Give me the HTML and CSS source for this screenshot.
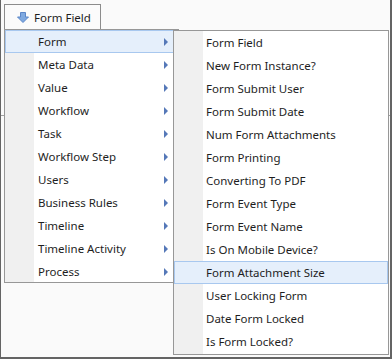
FILE: index.html
```html
<!DOCTYPE html>
<html lang="en">
<head>
    <meta charset="UTF-8">
    <title>Form Field</title>
    <link rel="stylesheet" href="styles.css">
</head>
<body>
    <div class="window">
        <div class="toolbar">
            <button class="tab-button">
                <svg class="tab-icon" width="12" height="11" viewBox="0 0 12 11">
                    <path d="M3.5 0.5h5v4.5h3l-5.5 5.5l-5.5-5.5h3z" fill="#7fa9e0" stroke="#5b86c8" stroke-width="1"/>
                </svg>
                Form Field
            </button>
        </div>
        <div class="panel-line"></div>

        <ul class="menu main-menu">
            <li class="item active has-sub">Form</li>
            <li class="item has-sub">Meta Data</li>
            <li class="item has-sub">Value</li>
            <li class="item has-sub">Workflow</li>
            <li class="item has-sub">Task</li>
            <li class="item has-sub">Workflow Step</li>
            <li class="item has-sub">Users</li>
            <li class="item has-sub">Business Rules</li>
            <li class="item has-sub">Timeline</li>
            <li class="item has-sub">Timeline Activity</li>
            <li class="item has-sub">Process</li>
        </ul>

        <ul class="menu sub-menu">
            <li class="item">Form Field</li>
            <li class="item">New Form Instance?</li>
            <li class="item">Form Submit User</li>
            <li class="item">Form Submit Date</li>
            <li class="item">Num Form Attachments</li>
            <li class="item">Form Printing</li>
            <li class="item">Converting To PDF</li>
            <li class="item">Form Event Type</li>
            <li class="item">Form Event Name</li>
            <li class="item">Is On Mobile Device?</li>
            <li class="item active">Form Attachment Size</li>
            <li class="item">User Locking Form</li>
            <li class="item">Date Form Locked</li>
            <li class="item">Is Form Locked?</li>
        </ul>
    </div>
</body>
</html>
```

FILE: styles.css
```css
body {
    margin: 0;
    font-family: "Noto Sans", "Open Sans", sans-serif;
    font-size: 11.5px;
    color: #1e1e1e;
}
.window {
    position: relative;
    width: 392px;
    height: 359px;
    box-sizing: border-box;
    background: #fafafa;
    border-left: 1px solid #646464;
    border-right: 2px solid #646464;
    border-bottom: 2px solid #646464;
}
.toolbar {
    padding: 4px 0 0 3px;
}
.tab-button {
    display: flex;
    align-items: center;
    gap: 5px;
    height: 26px;
    width: 97px;
    padding: 0 0 0 12px;
    box-sizing: border-box;
    background: #fbfbfb;
    border: 1px solid #8c8c8c;
    font: inherit;
    color: inherit;
}
.panel-line {
    margin-top: 85px;
    border-top: 1px solid #a0a0a0;
}
.menu {
    position: absolute;
    margin: 0;
    padding: 0;
    list-style: none;
    background: #fff;
    border: 1px solid #979797;
    box-sizing: border-box;
}
.menu::before {
    content: "";
    position: absolute;
    top: 0;
    bottom: 0;
    left: 0;
    background: #f0f0f0;
}
.main-menu {
    left: 3px;
    top: 29px;
    width: 175px;
    height: 254px;
}
.main-menu::before {
    width: 29px;
}
.sub-menu {
    left: 172px;
    top: 30px;
    width: 216px;
    height: 325px;
}
.sub-menu::before {
    width: 29px;
}
.item {
    position: relative;
    height: 23px;
    line-height: 22px;
    box-sizing: border-box;
    border: 1px solid transparent;
}
.main-menu .item {
    padding-left: 32px;
}
.sub-menu .item {
    padding-left: 31px;
}
.item.active {
    background: #e5effb;
    border-color: #a8c8ef;
}
.has-sub::after {
    content: "";
    position: absolute;
    right: 9px;
    top: 7px;
    border-left: 4px solid #5578b8;
    border-top: 4px solid transparent;
    border-bottom: 4px solid transparent;
}
```
